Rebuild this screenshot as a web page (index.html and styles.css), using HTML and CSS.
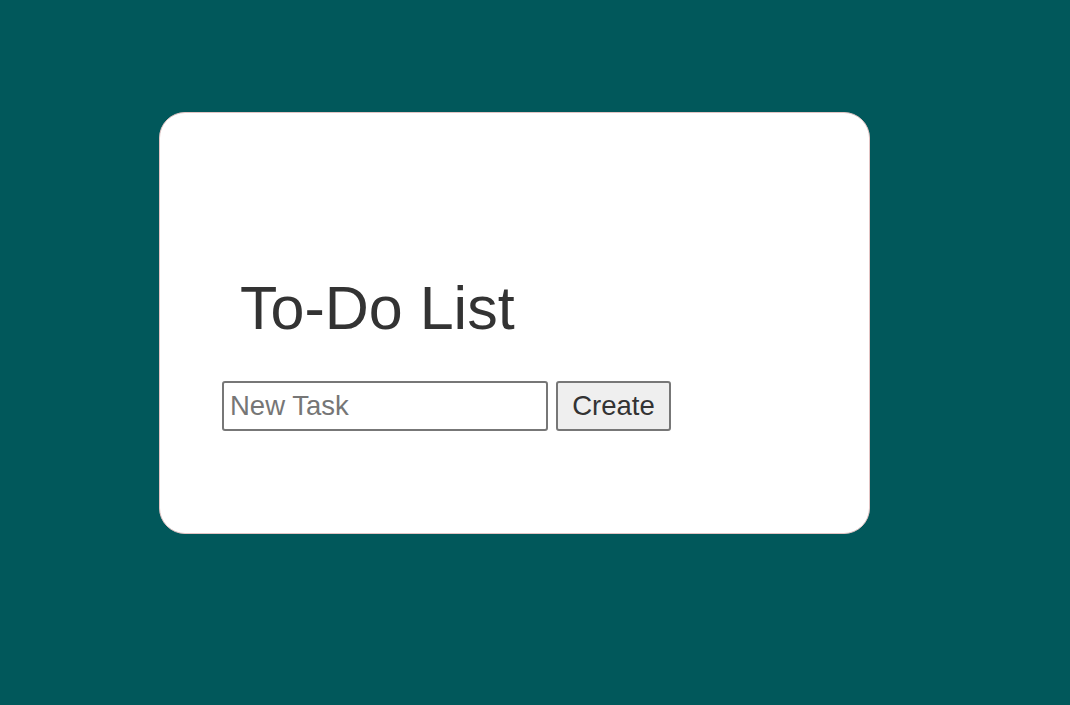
FILE: index.html
```html
<!DOCTYPE html>
<html lang="en">
<head>
<meta charset="utf-8">
<title>To-Do List</title>
<link rel="stylesheet" href="styles.css">
</head>
<body>
  <main class="card">
    <h1 class="title">To-Do List</h1>
    <form class="task-form">
      <input class="task-input" type="text" placeholder="New Task">
      <button class="task-button" type="button">Create</button>
    </form>
  </main>
</body>
</html>
```
FILE: styles.css
```css
html, body {
  margin: 0;
  padding: 0;
}
body {
  background: #01585b;
  font-family: "Liberation Sans", Arial, sans-serif;
  color: #333333;
  height: 705px;
  overflow: hidden;
}
.card {
  box-sizing: border-box;
  width: 711px;
  height: 422px;
  margin: 112px 0 0 159px;
  background: #ffffff;
  border: 1.5px solid #e2c4c4;
  border-radius: 26px;
  padding: 160px 0 0 62px;
}
.title {
  margin: 0 0 38px 18px;
  font-size: 61px;
  font-weight: normal;
  line-height: 70px;
  color: #333333;
}
.task-form {
  display: flex;
  gap: 8px;
  margin: 0;
}
.task-input {
  box-sizing: border-box;
  width: 326px;
  height: 50px;
  padding: 0 6px;
  font-family: "Liberation Sans", Arial, sans-serif;
  font-size: 27.5px;
  color: #333;
  background: #fff;
  border: 2px solid #777777;
  border-radius: 3px;
  outline: none;
}
.task-input::placeholder {
  color: #767676;
}
.task-button {
  box-sizing: border-box;
  width: 115px;
  height: 50px;
  padding: 0;
  font-family: "Liberation Sans", Arial, sans-serif;
  font-size: 27.5px;
  color: #333;
  background: #efefef;
  border: 2px solid #777777;
  border-radius: 3px;
}
```
